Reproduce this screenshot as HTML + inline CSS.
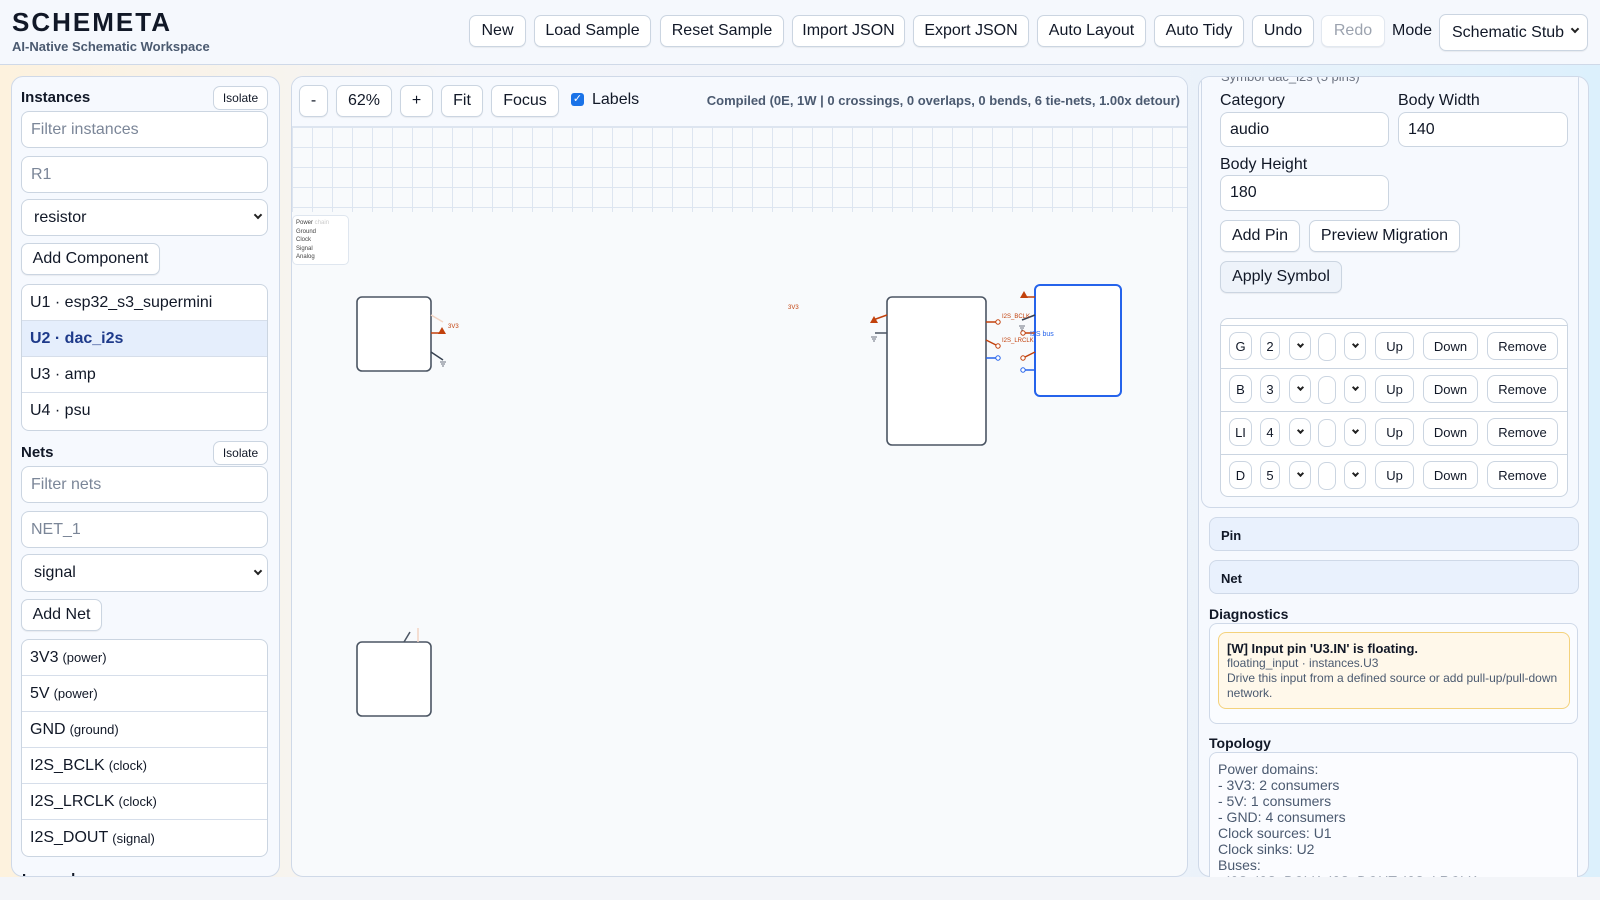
<!DOCTYPE html>
<html><head><meta charset="utf-8">
<style>
*{box-sizing:border-box;margin:0;padding:0}
body{width:1600px;height:900px;overflow:hidden;font-family:"Liberation Sans",sans-serif;color:#111827;background:linear-gradient(90deg,#fdf2de 0%,#f3f5fa 30%,#eef3fa 70%,#dcf0fc 100%);position:relative}
.a{position:absolute}
.hdr{left:0;top:0;width:1600px;height:65px;background:#f5f8fd;border-bottom:1px solid #cfd9e8}
.btn{position:absolute;height:32px;border:1px solid #cbd5e1;border-radius:7px;background:#fff;font-size:16px;display:flex;align-items:center;justify-content:center;color:#111827;box-shadow:0 1px 1px rgba(0,0,0,.06)}
.sbtn{position:absolute;height:24px;border:1px solid #cbd5e1;border-radius:7px;background:#fff;font-size:12px;display:flex;align-items:center;justify-content:center}
.inp{position:absolute;border:1px solid #cbd5e1;border-radius:8px;background:#fff;font-size:16px;display:flex;align-items:center;padding-left:9px}
.panel{position:absolute;background:#f6f9fe;border:1px solid #cfd9e8;border-radius:12px}
.list{position:absolute;border:1px solid #cbd5e1;border-radius:8px;background:#fff;overflow:hidden}
.list div{height:36px;border-bottom:1px solid #d6deea;display:flex;align-items:center;padding-left:8px;font-size:16px}
.list div:last-child{border-bottom:none}
.list small{font-size:13px;margin-left:4px}
.h{position:absolute;font-weight:bold;font-size:15px}
.chev{position:absolute;width:8px;height:8px;border-right:2px solid #222;border-bottom:2px solid #222;transform:rotate(45deg)}
.cell{position:absolute;height:28px;border:1px solid #cbd5e1;border-radius:8px;background:#fff;font-size:13px;display:flex;align-items:center;justify-content:center}
</style></head><body>
<div class="a hdr"></div>
<div class="a" style="left:12px;top:7px;font-size:26px;font-weight:bold;letter-spacing:2px;color:#111827">SCHEMETA</div>
<div class="a" style="left:12px;top:39px;font-size:13px;font-weight:bold;color:#4b5a70">AI-Native Schematic Workspace</div>
<div class="btn" style="left:469px;top:15px;width:57px">New</div>
<div class="btn" style="left:534px;top:15px;width:117px">Load Sample</div>
<div class="btn" style="left:660px;top:15px;width:124px">Reset Sample</div>
<div class="btn" style="left:792px;top:15px;width:113px">Import JSON</div>
<div class="btn" style="left:913px;top:15px;width:116px">Export JSON</div>
<div class="btn" style="left:1037px;top:15px;width:109px">Auto Layout</div>
<div class="btn" style="left:1154px;top:15px;width:90px">Auto Tidy</div>
<div class="btn" style="left:1252px;top:15px;width:62px">Undo</div>
<div class="btn" style="left:1321px;top:15px;width:64px;color:#9ca3af;border-color:#e2e8f0">Redo</div>
<div class="a" style="left:1392px;top:22px;font-size:16px">Mode</div>
<div class="btn" style="left:1439px;top:14px;width:149px;height:37px;justify-content:flex-start;padding-left:12px">Schematic Stub</div>
<div class="chev" style="left:1572px;top:26px;width:6px;height:6px"></div>

<!-- left panel -->
<div class="panel" style="left:11px;top:76px;width:269px;height:801px;overflow:hidden">
<div class="a" style="left:10px;top:794px;font-weight:bold;font-size:15px">Legend</div>
</div>
<div class="h" style="left:21px;top:89px">Instances</div>
<div class="sbtn" style="left:213px;top:86px;width:55px">Isolate</div>
<div class="inp" style="left:21px;top:111px;width:247px;height:37px;color:#7b8698">Filter instances</div>
<div class="inp" style="left:21px;top:156px;width:247px;height:37px;color:#7b8698">R1</div>
<div class="inp" style="left:21px;top:199px;width:247px;height:37px;padding-left:12px">resistor</div>
<div class="chev" style="left:255px;top:212px;width:6px;height:6px"></div>
<div class="btn" style="left:21px;top:243px;width:139px">Add Component</div>
<div class="list" style="left:21px;top:284px;width:247px;height:147px">
<div>U1 · esp32_s3_supermini</div>
<div style="background:#e5eefc;color:#1e3a8a;font-weight:bold">U2 · dac_i2s</div>
<div>U3 · amp</div>
<div>U4 · psu</div>
</div>
<div class="h" style="left:21px;top:444px">Nets</div>
<div class="sbtn" style="left:213px;top:441px;width:55px">Isolate</div>
<div class="inp" style="left:21px;top:466px;width:247px;height:37px;color:#7b8698">Filter nets</div>
<div class="inp" style="left:21px;top:511px;width:247px;height:37px;color:#7b8698">NET_1</div>
<div class="inp" style="left:21px;top:554px;width:247px;height:38px;padding-left:12px">signal</div>
<div class="chev" style="left:255px;top:568px;width:6px;height:6px"></div>
<div class="btn" style="left:21px;top:599px;width:81px">Add Net</div>
<div class="list" style="left:21px;top:639px;width:247px;height:218px">
<div>3V3<small>(power)</small></div>
<div>5V<small>(power)</small></div>
<div>GND<small>(ground)</small></div>
<div>I2S_BCLK<small>(clock)</small></div>
<div>I2S_LRCLK<small>(clock)</small></div>
<div>I2S_DOUT<small>(signal)</small></div>
</div>

<!-- canvas panel -->
<div class="panel" style="left:291px;top:76px;width:897px;height:801px;background:#f8fafc;overflow:hidden">
<div class="a" style="left:0;top:0;width:897px;height:49px;background:#f6f9fe"></div>
<div class="a" style="left:0;top:49px;width:897px;height:86px;background-color:#f8fafc;background-image:linear-gradient(#dde5f0 1px,transparent 1px),linear-gradient(90deg,#dde5f0 1px,transparent 1px);background-size:20px 20px;border-top:1px solid #dde5f0"></div>
<div class="a" style="left:0;top:138px;width:57px;height:50px;background:#fff;border:1px solid #dfe6ef;border-radius:5px;font-size:6px;line-height:8.5px;padding:3px 0 0 3px;color:#444">Power<span style="color:#ccc"> chain</span><br>Ground<br>Clock<br>Signal<br>Analog</div>
</div>
<div class="btn" style="left:299px;top:85px;width:29px">-</div>
<div class="btn" style="left:336px;top:85px;width:56px">62%</div>
<div class="btn" style="left:400px;top:85px;width:33px">+</div>
<div class="btn" style="left:441px;top:85px;width:42px">Fit</div>
<div class="btn" style="left:491px;top:85px;width:68px">Focus</div>
<div class="a" style="left:571px;top:93px;width:13px;height:13px;background:#1a73e8;border-radius:3px;color:#fff;font-size:11px;line-height:13px;text-align:center">✓</div>
<div class="a" style="left:592px;top:91px;font-size:16px">Labels</div>
<div class="a" style="left:600px;top:93px;width:580px;text-align:right;font-size:13px;font-weight:bold;color:#4b5a70">Compiled (0E, 1W | 0 crossings, 0 overlaps, 0 bends, 6 tie-nets, 1.00x detour)</div>

<svg class="a" style="left:0;top:0" width="1600" height="900">
<g fill="#fff" stroke="#4b5563" stroke-width="1.6">
<rect x="357" y="297" width="74" height="74" rx="5"/>
<rect x="887" y="297" width="99" height="148" rx="5"/>
<rect x="357" y="642" width="74" height="74" rx="5"/>
</g>
<rect x="1035" y="285" width="86" height="111" rx="5" fill="#fff" stroke="#2563eb" stroke-width="2"/>
<g stroke-width="1.5" fill="none">
<line x1="431" y1="333" x2="443" y2="333" stroke="#c2410c"/>
<line x1="431" y1="352" x2="443" y2="360" stroke="#374151"/>
<line x1="431" y1="315" x2="443" y2="322" stroke="#f3d5c5"/>
<line x1="887" y1="315" x2="873" y2="320" stroke="#c2410c"/>
<line x1="887" y1="333" x2="875" y2="333" stroke="#4b5563"/>
<line x1="986" y1="322" x2="998" y2="322" stroke="#c2410c"/>
<line x1="986" y1="340" x2="998" y2="346" stroke="#c2410c"/>
<line x1="986" y1="358" x2="998" y2="358" stroke="#2563eb"/>
<line x1="1035" y1="297" x2="1023" y2="297" stroke="#c2410c"/>
<line x1="1035" y1="315" x2="1022" y2="320" stroke="#374151"/>
<line x1="1035" y1="333" x2="1023" y2="333" stroke="#c2410c"/>
<line x1="1035" y1="352" x2="1023" y2="358" stroke="#c2410c"/>
<line x1="1035" y1="370" x2="1023" y2="370" stroke="#2563eb"/>
<line x1="404" y1="642" x2="410" y2="632" stroke="#4b5563"/>
<line x1="418" y1="642" x2="418" y2="628" stroke="#f3d5c5"/>
</g>
<g fill="#fff" stroke-width="1">
<circle cx="998" cy="322" r="2.2" stroke="#c2410c"/><circle cx="998" cy="346" r="2.2" stroke="#c2410c"/><circle cx="998" cy="358" r="2.2" stroke="#2563eb"/>
<circle cx="1023" cy="333" r="2.2" stroke="#c2410c"/><circle cx="1023" cy="358" r="2.2" stroke="#c2410c"/><circle cx="1023" cy="370" r="2.2" stroke="#2563eb"/>
</g>
<g fill="#c2410c"><path d="M438 334l4-7 4 7z"/><path d="M870 323l4-7 4 7z"/><path d="M1020 298l4-7 4 7z"/></g>
<g stroke="#6b7280" stroke-width="1"><path d="M440 362h6M441 364h4M442 366h2"/><path d="M871 337h6M872 339h4M873 341h2"/><path d="M1019 326h6M1020 328h4M1021 330h2"/></g>
<g font-family="Liberation Sans" font-size="6" fill="#c2410c"><text x="448" y="328">3V3</text><text x="788" y="309">3V3</text><text x="1002" y="318">I2S_BCLK</text><text x="1002" y="342">I2S_LRCLK</text></g>
<text x="1030" y="336" font-family="Liberation Sans" font-size="7" fill="#2563eb">I2S bus</text>
</svg>

<!-- right panel -->
<div class="panel" style="left:1198px;top:76px;width:391px;height:801px;overflow:hidden">
<div class="a" style="left:2px;top:-4px;width:378px;height:435px;border:1px solid #cfd9e8;border-radius:0 0 10px 10px;background:#f6f9fe"></div>
<div class="a" style="left:22px;top:-8px;font-size:13px;color:#6b7280">Symbol dac_i2s (5 pins)</div>
</div>
<div class="a" style="left:1220px;top:92px;font-size:16px">Category</div>
<div class="a" style="left:1398px;top:92px;font-size:16px">Body Width</div>
<div class="inp" style="left:1220px;top:112px;width:169px;height:35px">audio</div>
<div class="inp" style="left:1398px;top:112px;width:170px;height:35px">140</div>
<div class="a" style="left:1220px;top:156px;font-size:16px">Body Height</div>
<div class="inp" style="left:1220px;top:175px;width:169px;height:36px">180</div>
<div class="btn" style="left:1220px;top:220px;width:80px">Add Pin</div>
<div class="btn" style="left:1309px;top:220px;width:151px">Preview Migration</div>
<div class="btn" style="left:1220px;top:261px;width:122px;background:#eef3fa">Apply Symbol</div>
<div class="a" style="left:1220px;top:318px;width:348px;height:179px;border:1px solid #cbd5e1;border-radius:8px;background:#fff;overflow:hidden">
<div style="height:7px;border-bottom:1px solid #cbd5e1"></div>
<div style="height:43px;border-bottom:1px solid #cbd5e1"></div>
<div style="height:43px;border-bottom:1px solid #cbd5e1"></div>
<div style="height:43px;border-bottom:1px solid #cbd5e1"></div>
</div>
<div class="cell" style="left:1229px;top:332px;width:23px">G</div><div class="cell" style="left:1260px;top:332px;width:20px">2</div><div class="cell" style="left:1289px;top:332px;width:22px"><span class="chev" style="position:static;width:5px;height:5px;margin-top:-3px"></span></div><div class="cell" style="left:1318px;top:333px;width:18px"></div><div class="cell" style="left:1344px;top:332px;width:22px"><span class="chev" style="position:static;width:5px;height:5px;margin-top:-3px"></span></div><div class="cell" style="left:1375px;top:332px;width:39px">Up</div><div class="cell" style="left:1423px;top:332px;width:55px">Down</div><div class="cell" style="left:1487px;top:332px;width:71px">Remove</div>
<div class="cell" style="left:1229px;top:375px;width:23px">B</div><div class="cell" style="left:1260px;top:375px;width:20px">3</div><div class="cell" style="left:1289px;top:375px;width:22px"><span class="chev" style="position:static;width:5px;height:5px;margin-top:-3px"></span></div><div class="cell" style="left:1318px;top:376px;width:18px"></div><div class="cell" style="left:1344px;top:375px;width:22px"><span class="chev" style="position:static;width:5px;height:5px;margin-top:-3px"></span></div><div class="cell" style="left:1375px;top:375px;width:39px">Up</div><div class="cell" style="left:1423px;top:375px;width:55px">Down</div><div class="cell" style="left:1487px;top:375px;width:71px">Remove</div>
<div class="cell" style="left:1229px;top:418px;width:23px">LI</div><div class="cell" style="left:1260px;top:418px;width:20px">4</div><div class="cell" style="left:1289px;top:418px;width:22px"><span class="chev" style="position:static;width:5px;height:5px;margin-top:-3px"></span></div><div class="cell" style="left:1318px;top:419px;width:18px"></div><div class="cell" style="left:1344px;top:418px;width:22px"><span class="chev" style="position:static;width:5px;height:5px;margin-top:-3px"></span></div><div class="cell" style="left:1375px;top:418px;width:39px">Up</div><div class="cell" style="left:1423px;top:418px;width:55px">Down</div><div class="cell" style="left:1487px;top:418px;width:71px">Remove</div>
<div class="cell" style="left:1229px;top:461px;width:23px">D</div><div class="cell" style="left:1260px;top:461px;width:20px">5</div><div class="cell" style="left:1289px;top:461px;width:22px"><span class="chev" style="position:static;width:5px;height:5px;margin-top:-3px"></span></div><div class="cell" style="left:1318px;top:462px;width:18px"></div><div class="cell" style="left:1344px;top:461px;width:22px"><span class="chev" style="position:static;width:5px;height:5px;margin-top:-3px"></span></div><div class="cell" style="left:1375px;top:461px;width:39px">Up</div><div class="cell" style="left:1423px;top:461px;width:55px">Down</div><div class="cell" style="left:1487px;top:461px;width:71px">Remove</div>

<div class="a" style="left:1209px;top:517px;width:370px;height:34px;border:1px solid #cfd9e8;border-radius:8px;background:#e9f1fd;font-weight:bold;font-size:13px;padding:10px 0 0 11px">Pin</div>
<div class="a" style="left:1209px;top:560px;width:370px;height:34px;border:1px solid #cfd9e8;border-radius:8px;background:#e9f1fd;font-weight:bold;font-size:13px;padding:10px 0 0 11px">Net</div>
<div class="h" style="left:1209px;top:606px;font-size:14px">Diagnostics</div>
<div class="a" style="left:1209px;top:623px;width:369px;height:101px;border:1px solid #cfd9e8;border-radius:8px;background:#fafcff"></div>
<div class="a" style="left:1218px;top:632px;width:352px;height:77px;border:1px solid #f4d27c;border-radius:8px;background:#fff8ea;padding:8px 8px 0 8px;font-size:12px;color:#4b5a70;line-height:15px">
<div style="font-weight:bold;color:#111827;font-size:13px">[W] Input pin 'U3.IN' is floating.</div>
floating_input · instances.U3<br>Drive this input from a defined source or add pull-up/pull-down network.</div>
<div class="h" style="left:1209px;top:735px;font-size:14px">Topology</div>
<div class="a" style="left:1209px;top:752px;width:369px;height:140px;border:1px solid #cfd9e8;border-radius:8px;background:#fbfcff;padding:8px 0 0 8px;font-size:14px;line-height:16px;color:#4b5a70">Power domains:<br>- 3V3: 2 consumers<br>- 5V: 1 consumers<br>- GND: 4 consumers<br>Clock sources: U1<br>Clock sinks: U2<br>Buses:<br>- I2S: I2S_BCLK, I2S_DOUT, I2S_LRCLK</div>
<div class="a" style="left:0;top:877px;width:1600px;height:23px;background:#f3f5f9"></div>
</body></html>
